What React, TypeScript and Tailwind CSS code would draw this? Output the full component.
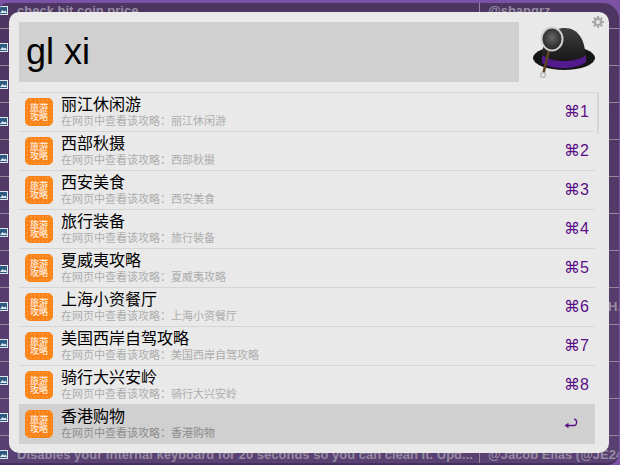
const results = [
  "丽江休闲游",
  "西部秋摄",
  "西安美食",
  "旅行装备",
  "夏威夷攻略",
  "上海小资餐厅",
  "美国西岸自驾攻略",
  "骑行大兴安岭",
  "香港购物",
];

const tweets = [
  { text: "check bit coin price", user: "@shangrz" },
  ...Array.from({ length: 7 }, () => ({ text: "", user: "" })),
  { text: "", user: "H." },
  ...Array.from({ length: 3 }, () => ({ text: "", user: "" })),
  {
    text: "Disables your internal keyboard for 20 seconds so you can clean it. Upd...",
    user: "@Jacob Elias (@JE24)",
  },
];

function Thumb() {
  return (
    <svg width="8" height="9" viewBox="0 0 8 9" className="shrink-0">
      <rect width="8" height="9" fill="#dfe6ec" />
      <rect y="1" width="7" height="7" fill="#2c5a80" />
      <path d="M0 7 L2.5 4 L4 5.5 L5.5 4.5 L7 7 Z" fill="#dfe8f0" />
    </svg>
  );
}

function TravelIcon() {
  return (
    <div className="w-7 h-7 shrink-0 rounded-[5px] bg-[#fb8216] bg-[radial-gradient(#fd9330_1px,transparent_1px)] bg-size-[4px_4px] flex items-center justify-center">
      <div className="grid grid-cols-2 w-[18px] text-[9px] leading-[9px] text-center text-white font-['Noto_Sans_CJK_SC',sans-serif]">
        <span>旅</span>
        <span>游</span>
        <span>攻</span>
        <span>略</span>
      </div>
    </div>
  );
}

function Hat() {
  return (
    <svg width="66" height="56" viewBox="0 0 66 56">
      <defs>
        <linearGradient id="crown" x1="0" y1="0" x2="0" y2="1">
          <stop offset="0" stopColor="#3e3e3e" />
          <stop offset="1" stopColor="#131313" />
        </linearGradient>
        <radialGradient id="lens" cx="0.5" cy="0.45" r="0.6">
          <stop offset="0" stopColor="#666" />
          <stop offset="1" stopColor="#1c1c1c" />
        </radialGradient>
      </defs>
      <ellipse cx="32" cy="32" rx="31" ry="12" fill="#161616" />
      <path d="M10 32 C10 12 20 2 33 2 C46 2 53.5 14 53.5 32 C44 42 20 42 10 32 Z" fill="url(#crown)" />
      <path d="M10 29 C20 37 44 37 54 29 L54 36 C44 44 20 44 10 37 Z" fill="#521a8c" />
      <line x1="17" y1="24" x2="11.5" y2="47" stroke="#5a4326" strokeWidth="2.6" />
      <circle cx="11" cy="49" r="2.4" fill="none" stroke="#b5b5b5" strokeWidth="1.2" />
      <ellipse cx="20" cy="13" rx="10.5" ry="11.5" fill="url(#lens)" stroke="#cfcfcf" strokeWidth="2" />
    </svg>
  );
}

function Gear() {
  return (
    <svg width="12" height="12" viewBox="0 0 12 12" className="block">
      <circle cx="6" cy="6" r="3.2" fill="none" stroke="#a8a8a8" strokeWidth="2.4" />
      <g stroke="#a8a8a8" strokeWidth="2">
        <line x1="6" y1="0" x2="6" y2="2.5" />
        <line x1="6" y1="9.5" x2="6" y2="12" />
        <line x1="0" y1="6" x2="2.5" y2="6" />
        <line x1="9.5" y1="6" x2="12" y2="6" />
        <line x1="1.8" y1="1.8" x2="3.4" y2="3.4" />
        <line x1="8.6" y1="8.6" x2="10.2" y2="10.2" />
        <line x1="1.8" y1="10.2" x2="3.4" y2="8.6" />
        <line x1="8.6" y1="3.4" x2="10.2" y2="1.8" />
      </g>
    </svg>
  );
}

function ReturnKey() {
  return (
    <svg width="14" height="12" viewBox="0 0 14 12">
      <path d="M10 1.2 C13.5 1.2 13.5 7.5 10 7.5 L2 7.5" fill="none" stroke="#5b0f86" strokeWidth="1.3" />
      <path d="M0.5 7.5 L4.5 4.8 L4.5 10.2 Z" fill="#5b0f86" />
    </svg>
  );
}

export default function App() {
  return (
    <div className="relative w-[620px] h-[465px] overflow-hidden bg-[#7c52a6] pt-[3px] pr-px font-['Liberation_Sans','Noto_Sans_CJK_SC',sans-serif]">
      {/* tweet list behind the launcher */}
      <div className="h-full overflow-hidden rounded-tl-[6px] rounded-tr-[16px] rounded-br-[12px] border-b-2 border-[#453060] bg-linear-to-b from-[#4d3561] to-[#5a4174]">
        <div className="flex flex-col -mt-[11px]">
          {tweets.map((t, i) => (
            <div key={i} className="flex shrink-0 h-[37px] border-b border-[#93879e] text-[13px] font-bold text-[#968ba1]">
              <div className="w-[480px] shrink-0 flex items-center gap-[9px] border-r border-[#93879e] overflow-hidden whitespace-nowrap">
                <Thumb />
                <span className="pt-px">{t.text}</span>
              </div>
              <div className={`flex items-center pt-px whitespace-nowrap ${t.user === "H." ? "pl-[128px]" : "pl-[8px]"}`}>
                {t.user}
              </div>
            </div>
          ))}
        </div>
      </div>

      {/* launcher panel */}
      <div className="absolute left-[9px] top-[12px] w-[600px] h-[441px] rounded-[10px] bg-[#e9e9e9] pt-[10px] px-[10px]">
        <div className="absolute right-[5px] top-[4px]">
          <Gear />
        </div>
        <div className="flex">
          <div className="w-[500px] h-[60px] bg-[#d0d0d0] pl-[7px] text-[36px] leading-[60px] text-black">gl xi</div>
          <div className="ml-[13px] pt-[4px]">
            <Hat />
          </div>
        </div>
        <div className="relative mt-[10px] w-[576px] border-t border-[#d5d5d5]">
          <div className="absolute right-[-4px] -top-px w-[2px] h-[42px] bg-[#d6d6d6]" />
          {results.map((title, i) => {
            const selected = i === results.length - 1;
            const beforeSelected = i === results.length - 2;
            return (
              <div
                key={title}
                className={`flex items-center pl-[6px] pr-[7px] ${
                  selected
                    ? "h-[40px] bg-[#d0d0d0]"
                    : beforeSelected
                      ? "h-[38px]"
                      : "h-[39px] border-b border-[#d5d5d5]"
                }`}
              >
                <TravelIcon />
                <div className="ml-[8px] flex-1 min-w-0">
                  <div className="text-base leading-[16px] mb-[2px] text-black">{title}</div>
                  <div className={`text-[11px] leading-[13px] ${selected ? "text-[#8c8c8c]" : "text-[#adadad]"}`}>
                    在网页中查看该攻略：{title}
                  </div>
                </div>
                <div className="w-[24px] text-base text-[#5b0f86] font-['Liberation_Sans','DejaVu_Sans',sans-serif]">
                  {selected ? <ReturnKey /> : `⌘${i + 1}`}
                </div>
              </div>
            );
          })}
        </div>
      </div>
    </div>
  );
}
